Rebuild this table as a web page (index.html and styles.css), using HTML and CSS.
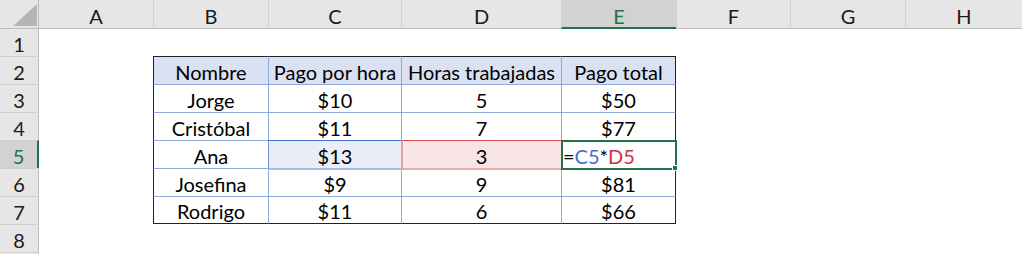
FILE: index.html
```html
<!DOCTYPE html>
<html lang="es">
<head>
<meta charset="utf-8">
<title>Hoja</title>
<link rel="stylesheet" href="styles.css">
</head>
<body>
<div class="sheet">
  <div class="corner"><svg class="corner-tri" width="39" height="28" viewBox="0 0 39 28"><polygon points="13,26 37,26 37,4" fill="#b5b5b5"/></svg></div>
  <div class="ch first">A</div>
  <div class="ch">B</div>
  <div class="ch">C</div>
  <div class="ch">D</div>
  <div class="ch sel">E</div>
  <div class="ch">F</div>
  <div class="ch">G</div>
  <div class="ch">H</div>

  <div class="rh first">1</div>
  <div class="c"></div><div class="c"></div><div class="c"></div><div class="c"></div><div class="c"></div><div class="c"></div><div class="c"></div><div class="c"></div>

  <div class="rh">2</div>
  <div class="c"></div>
  <div class="t th top left">Nombre</div>
  <div class="t th top">Pago por hora</div>
  <div class="t th top">Horas trabajadas</div>
  <div class="t th top right">Pago total</div>
  <div class="c"></div><div class="c"></div><div class="c"></div>

  <div class="rh">3</div>
  <div class="c"></div>
  <div class="t left">Jorge</div>
  <div class="t">$10</div>
  <div class="t">5</div>
  <div class="t right">$50</div>
  <div class="c"></div><div class="c"></div><div class="c"></div>

  <div class="rh">4</div>
  <div class="c"></div>
  <div class="t left">Cristóbal</div>
  <div class="t">$11</div>
  <div class="t">7</div>
  <div class="t right">$77</div>
  <div class="c"></div><div class="c"></div><div class="c"></div>

  <div class="rh sel">5</div>
  <div class="c"></div>
  <div class="t left">Ana</div>
  <div class="t ref-blue">$13</div>
  <div class="t ref-red">3</div>
  <div class="t right active"><span class="f-op">=</span><span class="f-blue">C5</span><span class="f-op">*</span><span class="f-red">D5</span></div>
  <div class="c"></div><div class="c"></div><div class="c"></div>

  <div class="rh">6</div>
  <div class="c"></div>
  <div class="t left">Josefina</div>
  <div class="t">$9</div>
  <div class="t">9</div>
  <div class="t right">$81</div>
  <div class="c"></div><div class="c"></div><div class="c"></div>

  <div class="rh">7</div>
  <div class="c"></div>
  <div class="t left bottom">Rodrigo</div>
  <div class="t bottom">$11</div>
  <div class="t bottom">6</div>
  <div class="t right bottom">$66</div>
  <div class="c"></div><div class="c"></div><div class="c"></div>

  <div class="rh">8</div>
  <div class="c"></div><div class="c"></div><div class="c"></div><div class="c"></div><div class="c"></div><div class="c"></div><div class="c"></div><div class="c"></div>

  <div class="rh"></div>
  <div class="c"></div><div class="c"></div><div class="c"></div><div class="c"></div><div class="c"></div><div class="c"></div><div class="c"></div><div class="c"></div>
</div>
</body>
</html>
```
FILE: styles.css
```css
* { box-sizing: border-box; }
html, body { margin: 0; padding: 0; background: #fff; }
body { overflow: hidden; }

.sheet {
  display: grid;
  grid-template-columns: 39px 114px 115px 133px 160px 115px 114px 115px 117px;
  grid-template-rows: 29px 27px repeat(7, 28px) 10px;
  width: 1022px;
  height: 254px;
  font-family: Lato, "Open Sans", sans-serif;
  font-size: 20px;
  color: #000;
}

.corner {
  background: #e6e6e6;
  border-right: 1px solid #bdbdbd;
  border-bottom: 1px solid #bdbdbd;
}
.corner-tri { display: block; }

.ch {
  background: #e6e6e6;
  border-left: 1px solid #d0d0d0;
  border-bottom: 1px solid #bdbdbd;
  display: flex;
  align-items: center;
  justify-content: center;
  padding-top: 3px;
  color: #1a1a1a;
}
.ch.first { border-left: none; }
.ch.sel {
  background: #d2d2d2;
  color: #217346;
  border-bottom: 2px solid #217346;
  padding-top: 4px;
}

.rh {
  background: #e6e6e6;
  border-right: 1px solid #bdbdbd;
  border-top: 1px solid #d0d0d0;
  display: flex;
  align-items: center;
  justify-content: center;
  padding-top: 2px;
  color: #1a1a1a;
}
.rh.first { border-top: none; }
.rh.sel {
  background: #d2d2d2;
  color: #217346;
  border-right: 2px solid #217346;
}

.c { background: #fff; }

.t {
  position: relative;
  border-top: 1px solid #8ea9db;
  border-left: 1px solid #8ea9db;
  display: flex;
  align-items: center;
  justify-content: center;
  padding-top: 2px;
  white-space: nowrap;
}
.t.th { background: #d9e1f2; }
.t.top { border-top-color: #222; }
.t.left { border-left-color: #222; }
.t.right { border-right: 1px solid #222; }
.t.bottom { border-bottom: 1px solid #222; }

.ref-blue { background: #e9eef8; }
.ref-blue::after {
  content: "";
  position: absolute;
  top: -1px; left: -1px; right: -1px; bottom: -2px;
  border-top: 1px solid #3f70c9;
  border-left: 1px solid #6f92d6;
  border-bottom: 2px solid #a6bde6;
  z-index: 1;
}
.ref-red { background: #f9e5e5; }
.ref-red::after {
  content: "";
  position: absolute;
  top: -1px; left: -1px; right: -2px; bottom: -2px;
  border-top: 1px solid #d24a4a;
  border-left: 2px solid #e8a1a1;
  border-right: 2px solid #e8a1a1;
  border-bottom: 2px solid #eba9a9;
  z-index: 1;
}

.active {
  justify-content: flex-start;
  padding-left: 1px;
}
.active::after {
  content: "";
  position: absolute;
  top: -1px; left: -1px; right: -2px; bottom: -2px;
  border: 2px solid #217346;
  z-index: 2;
}
.active::before {
  content: "";
  position: absolute;
  right: -3px; bottom: -3px;
  width: 4px; height: 4px;
  background: #217346;
  border: 1px solid #fff;
  z-index: 3;
}
.f-op { color: #000; }
.f-blue { color: #3d6fd1; }
.f-red { color: #cc3340; }
```
